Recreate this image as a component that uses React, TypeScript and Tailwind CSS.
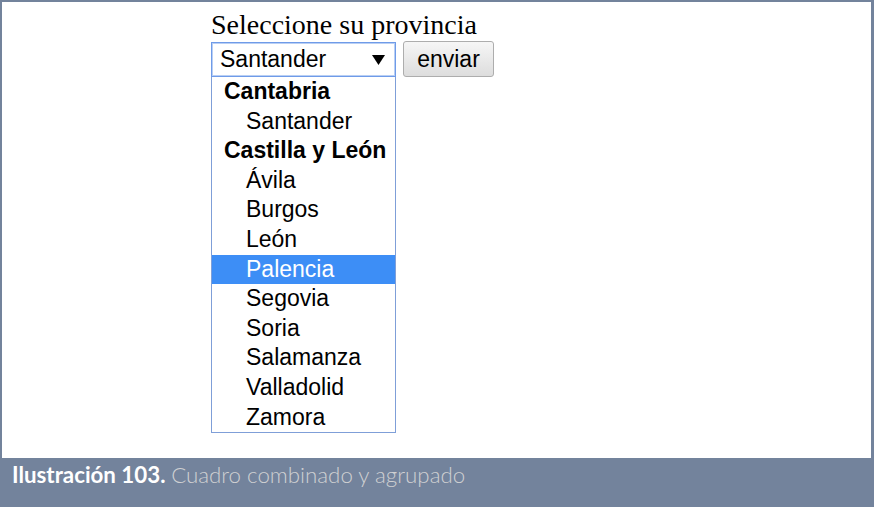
const groups = [
  { label: "Cantabria", options: ["Santander"] },
  {
    label: "Castilla y León",
    options: ["Ávila", "Burgos", "León", "Palencia", "Segovia", "Soria", "Salamanza", "Valladolid", "Zamora"],
  },
];

const selected = "Palencia";

export default function App() {
  return (
    <div className="flex h-[507px] w-[874px] flex-col bg-[#73839c] pb-[2px] pl-[2px] pr-[3px] pt-[2px]">
      <div className="flex-1 bg-white pl-[209px] pt-[8px]">
        <h1 className="h-[30px] font-['Liberation_Serif',serif] text-[28px] leading-[30px] text-black">
          Seleccione su provincia
        </h1>

        <div className="mt-[1px] flex items-start gap-[7px] font-['Liberation_Sans',Arial,sans-serif] text-[23px] text-black">
          <div className="w-[185px]">
            <div className="mt-[1px] flex h-[35px] items-center justify-between border border-[#6f9be8] pl-[8px] pr-[10px] shadow-[inset_0_0_0_1px_#b9cff4]">
              <span className="leading-none">Santander</span>
              <svg width="13" height="10" viewBox="0 0 13 10">
                <path d="M0 0 H13 L6.5 10 Z" fill="#000" />
              </svg>
            </div>
            <div className="border border-t-0 border-[#7f9fd8] bg-white">
              {groups.map((g) => (
                <div key={g.label}>
                  <div className="h-[29.6px] pl-[12px] font-bold leading-[28.6px]">{g.label}</div>
                  {g.options.map((o) => (
                    <div
                      key={o}
                      className={
                        o === selected
                          ? "h-[29.6px] bg-[#3d8ef6] pl-[34px] leading-[28.6px] text-white"
                          : "h-[29.6px] pl-[34px] leading-[28.6px]"
                      }
                    >
                      {o}
                    </div>
                  ))}
                </div>
              ))}
            </div>
          </div>

          <button
            type="button"
            className="h-[36px] w-[91px] rounded-[3px] border border-[#adadad] bg-gradient-to-b from-[#f6f6f6] to-[#dddddd] text-[23px] leading-none"
          >
            enviar
          </button>
        </div>
      </div>

      <div className="mt-[1px] h-[46px] pl-[10px] pt-[4px] font-['Lato',sans-serif] text-[22.3px] leading-[24px]">
        <span className="font-bold text-white">Ilustración 103.</span>{" "}
        <span className="font-light text-[#cfd0d2]">Cuadro combinado y agrupado</span>
      </div>
    </div>
  );
}
